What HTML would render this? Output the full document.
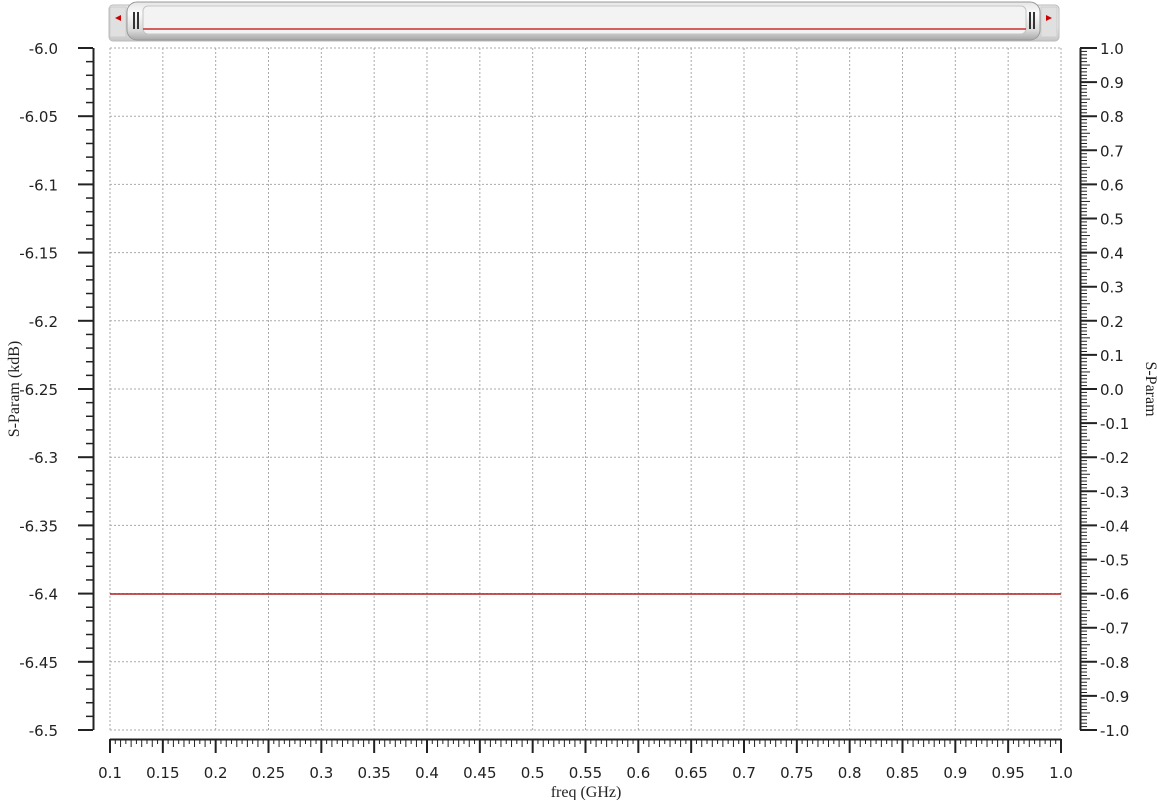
<!DOCTYPE html>
<html><head><meta charset="utf-8"><style>
html,body{margin:0;padding:0;background:#fff;width:1157px;height:800px;overflow:hidden}
svg{display:block}
text{font-family:"DejaVu Sans","Liberation Sans",sans-serif;font-size:15px;fill:#222}
.t{font-family:"Liberation Serif","DejaVu Serif",serif;font-size:16px}
</style></head><body>
<svg id="s" width="1157" height="800" xmlns="http://www.w3.org/2000/svg">
<defs>
<linearGradient id="g" x1="0" y1="0" x2="0" y2="1">
<stop offset="0" stop-color="#e6e6e6"/><stop offset="0.3" stop-color="#fafafa"/><stop offset="0.75" stop-color="#d8d8d8"/><stop offset="1" stop-color="#a8a8a8"/></linearGradient>
<linearGradient id="g2" x1="0" y1="0" x2="0" y2="1">
<stop offset="0" stop-color="#e8e8e8"/><stop offset="0.6" stop-color="#f2f2f2"/><stop offset="1" stop-color="#c4c4c4"/></linearGradient>
</defs>
<rect x="109" y="5" width="950" height="36" rx="4" fill="url(#g2)" stroke="#bbb"/>
<rect x="110" y="7" width="16" height="30" fill="#e0e0e0" stroke="#ccc"/>
<polygon points="115,18 121,15 121,21" fill="#c00"/>
<rect x="1041" y="7" width="16" height="30" fill="#e0e0e0" stroke="#ccc"/>
<polygon points="1052,18 1046,15 1046,21" fill="#c00"/>
<rect x="127" y="2" width="913" height="38" rx="10" fill="url(#g)" stroke="#999"/>
<rect x="143" y="6" width="883" height="28" rx="5" fill="#f3f3f3" stroke="#c4c4c4"/>
<line x1="143" y1="29" x2="1026" y2="29" stroke="#c83030" stroke-width="1.5"/>
<rect x="133" y="12" width="2" height="17" fill="#333"/><rect x="137" y="12" width="2" height="17" fill="#333"/>
<rect x="1029" y="12" width="2" height="17" fill="#333"/><rect x="1033" y="12" width="2" height="17" fill="#333"/>
<g id="grid" stroke="#aaa" stroke-width="1" stroke-dasharray="2,2"></g>
<line x1="110" y1="594" x2="1061" y2="594" stroke="#b02020" stroke-width="1.5"/>
<g id="ax" stroke="#222" stroke-width="1"></g>
<g id="tx"></g>
<text class="t" x="19" y="389" transform="rotate(-90 19 389)" text-anchor="middle">S-Param (kdB)</text>
<text class="t" x="1146" y="389" transform="rotate(90 1146 389)" text-anchor="middle">S-Param</text>
<text class="t" x="586" y="797" text-anchor="middle">freq (GHz)</text>
</svg>
<script>
var NS="http://www.w3.org/2000/svg";
function el(p,t,a,txt){var e=document.createElementNS(NS,t);for(var k in a)e.setAttribute(k,a[k]);if(txt!=null)e.textContent=txt;document.getElementById(p).appendChild(e);}
var L=110,R=1061,T=48,B=730;
for(var i=0;i<=18;i++){var x=L+(R-L)*i/18;el("grid","line",{x1:x,y1:T,x2:x,y2:B});}
for(var j=0;j<=10;j++){var y=T+(B-T)*j/10;el("grid","line",{x1:L,y1:y,x2:R,y2:y});}
el("ax","line",{x1:93.5,y1:T,x2:93.5,y2:B,"stroke-width":2});
for(var k=0;k<=50;k++){var y=T+(B-T)*k/50;var maj=k%5==0;el("ax","line",{x1:maj?78:86,y1:y,x2:93,y2:y,"stroke-width":maj?2:1.5});}
var ly=["-6.0","-6.05","-6.1","-6.15","-6.2","-6.25","-6.3","-6.35","-6.4","-6.45","-6.5"];
for(var j=0;j<=10;j++){el("tx","text",{x:58,y:T+(B-T)*j/10+6,"text-anchor":"end"},ly[j]);}
el("ax","line",{x1:1080.5,y1:T,x2:1080.5,y2:B,"stroke-width":2});
for(var k=0;k<=200;k++){var y=T+(B-T)*k/200;var maj=k%10==0,mid=k%5==0;el("ax","line",{x1:1080,y1:y,x2:maj?1097:(mid?1090:1087),y2:y,"stroke-width":maj?2:1});}
for(var j=0;j<=20;j++){var v=(1-j*0.1);var s=v.toFixed(1);if(s=="-0.0")s="0.0";el("tx","text",{x:1100,y:T+(B-T)*j/20+6},s);}
el("ax","line",{x1:L,y1:739.5,x2:R,y2:739.5,"stroke-width":2});
for(var k=0;k<=180;k++){var x=L+(R-L)*k/180;var maj=k%10==0,mid=k%2==0;el("ax","line",{x1:x,y1:739,x2:x,y2:maj?753:(mid?747:744),"stroke-width":maj?2:1});}
var lx=["0.1","0.15","0.2","0.25","0.3","0.35","0.4","0.45","0.5","0.55","0.6","0.65","0.7","0.75","0.8","0.85","0.9","0.95","1.0"];
for(var i=0;i<=18;i++){el("tx","text",{x:L+(R-L)*i/18,y:778,"text-anchor":"middle"},lx[i]);}
</script>
</body></html>
